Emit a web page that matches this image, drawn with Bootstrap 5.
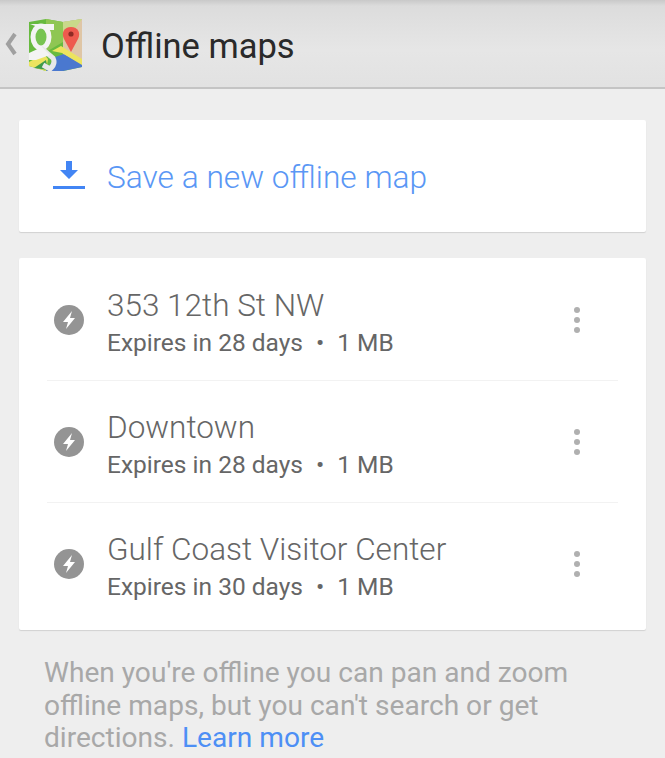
<!DOCTYPE html>
<html lang="en">
<head>
    <meta charset="UTF-8">
    <meta name="viewport" content="width=device-width, initial-scale=1.0">
    <title>Offline maps</title>
    <link href="https://cdn.jsdelivr.net/npm/bootstrap@5.3.0/dist/css/bootstrap.min.css" rel="stylesheet">
    <style>
        html, body { height: 100%; overflow: hidden; }
        body { background: #eeeeee; font-family: Roboto, "Liberation Sans", sans-serif; }
        .top-bar { height: 89px; background: linear-gradient(#c9c9c9 0, #dcdcdc 6px, #e6e6e6 50px, #e2e2e2 86px); border-bottom: 2px solid #c4c4c4; padding-left: 4px; }
        .top-title { font-size: 34.5px; color: #2a2a2a; margin: 5px 0 0 18px; line-height: 1; }
        .back-icon { width: 14px; height: 26px; margin-right: 10px; }
        .map-logo { width: 55px; height: 54px; margin-top: 2px; filter: blur(.5px); }
        .page-body { padding: 31px 19px 0; }
        .sheet { background: #fff; border-radius: 2px; box-shadow: 0 1px 1px rgba(0,0,0,.12); }
        .save-row { height: 112px; padding-left: 33px; margin-bottom: 26px; }
        .save-text { font-size: 31.7px; font-weight: 300; color: #5a97f5; margin: 3px 0 0 21px; }
        .map-list { padding: 1px 28px 0; height: 372px; }
        .map-row { height: 122px; border-bottom: 1px solid #f2f2f2; padding-left: 7px; }
        .map-row:last-child { border-bottom: 0; }
        .bolt-icon { width: 30px; height: 30px; margin-right: 23px; flex-shrink: 0; }
        .map-text { padding-top: 6px; }
        .map-name { font-size: 31.5px; font-weight: 300; color: #666; line-height: 36px; }
        .map-info { font-size: 24.5px; color: #666; line-height: 30px; margin-top: 4px; }
        .map-info span { margin: 0 13px; }
        .more-dots { width: 8px; height: 28px; margin-right: 37px; }
        .foot-note { font-size: 28.1px; line-height: 32.5px; color: #a8a8a8; padding: 27px 0 0 25px; white-space: nowrap; }
        .foot-note a { color: #4d8ff5; text-decoration: none; }
    </style>
</head>
<body>
    <!-- Action bar -->
    <div class="top-bar d-flex align-items-center">
        <svg class="back-icon" viewBox="0 0 14 26"><path d="M11 3 L4 13 L11 23" fill="none" stroke="#a0a0a0" stroke-width="4"/></svg>
        <svg class="map-logo" viewBox="0 0 55 54">
            <!-- map sheet -->
            <path d="M1 4 L18 1 L35 4 L54 1 V49 L35 53 L18 53 L1 48 Z" fill="#67ba3f"/>
            <path d="M18 1 L35 4 V24 L18 34 Z" fill="#8fc653"/>
            <path d="M35 4 L54 1 V49 L35 40 Z" fill="#dfc6a6"/>
            <path d="M35 4 L54 1 L38 24 L35 22 Z" fill="#c9d98a"/>
            <!-- roads and water -->
            <path d="M18 53 L27 39 L36 36 L54 46 V49 L35 53 Z" fill="#4a78cf"/>
            <path d="M24 33 L33 28 L54 41 V47 L34 35 Z" fill="#ece45f"/>
            <path d="M1 48 V44 L16 36 L20 41 L18 53 Z" fill="#ece45f"/>
            <path d="M6 50 L18 42 L20 52 Z" fill="#3f9b4b"/>
            <!-- g mark -->
            <ellipse cx="13" cy="19" rx="8" ry="11" fill="#78c452" stroke="#f4f4f4" stroke-width="5"/>
            <path d="M2 6 H26 V12 H18 Z" fill="#f4f4f4"/>
            <path d="M13 30 L25 40 Q28 46 22 51 L15 47" fill="none" stroke="#e8e8e8" stroke-width="5"/>
            <path d="M1 35 L14 29 L22 37 L8 42 L1 42 Z" fill="#f4f4f4"/>
            <!-- pin -->
            <path d="M43 9 C36 9 33 15 36 21 L43 34 L50 21 C53 15 50 9 43 9 Z" fill="#ee5a4e"/>
            <circle cx="43" cy="16" r="2.6" fill="#8e2a24"/>
        </svg>
        <div class="top-title">Offline maps</div>
    </div>

    <div class="page-body">
        <!-- Save row -->
        <div class="sheet save-row d-flex align-items-center">
            <svg width="34" height="30" viewBox="0 0 34 30"><path d="M14 0 H20 V9 H26 L17 18 L8 9 H14 Z M1 25 H33 V28 H1 Z" fill="#4285f4"/></svg>
            <div class="save-text">Save a new offline map</div>
        </div>

        <!-- Saved maps -->
        <div class="sheet map-list">
            <div class="map-row d-flex align-items-center">
                <svg class="bolt-icon" viewBox="0 0 30 30"><circle cx="15" cy="15" r="15" fill="#949494"/><path d="M18 6 L9 17 H14 L12 24 L21 13 H16 Z" fill="#fff"/></svg>
                <div class="flex-grow-1 map-text">
                    <div class="map-name">353 12th St NW</div>
                    <div class="map-info">Expires in 28 days<span>•</span>1 MB</div>
                </div>
                <svg class="more-dots" viewBox="0 0 8 28"><circle cx="4" cy="4" r="3" fill="#b0b0b0"/><circle cx="4" cy="14" r="3" fill="#b0b0b0"/><circle cx="4" cy="24" r="3" fill="#b0b0b0"/></svg>
            </div>
            <div class="map-row d-flex align-items-center">
                <svg class="bolt-icon" viewBox="0 0 30 30"><circle cx="15" cy="15" r="15" fill="#949494"/><path d="M18 6 L9 17 H14 L12 24 L21 13 H16 Z" fill="#fff"/></svg>
                <div class="flex-grow-1 map-text">
                    <div class="map-name">Downtown</div>
                    <div class="map-info">Expires in 28 days<span>•</span>1 MB</div>
                </div>
                <svg class="more-dots" viewBox="0 0 8 28"><circle cx="4" cy="4" r="3" fill="#b0b0b0"/><circle cx="4" cy="14" r="3" fill="#b0b0b0"/><circle cx="4" cy="24" r="3" fill="#b0b0b0"/></svg>
            </div>
            <div class="map-row d-flex align-items-center">
                <svg class="bolt-icon" viewBox="0 0 30 30"><circle cx="15" cy="15" r="15" fill="#949494"/><path d="M18 6 L9 17 H14 L12 24 L21 13 H16 Z" fill="#fff"/></svg>
                <div class="flex-grow-1 map-text">
                    <div class="map-name">Gulf Coast Visitor Center</div>
                    <div class="map-info">Expires in 30 days<span>•</span>1 MB</div>
                </div>
                <svg class="more-dots" viewBox="0 0 8 28"><circle cx="4" cy="4" r="3" fill="#b0b0b0"/><circle cx="4" cy="14" r="3" fill="#b0b0b0"/><circle cx="4" cy="24" r="3" fill="#b0b0b0"/></svg>
            </div>
        </div>

        <div class="foot-note">When you're offline you can pan and zoom<br>offline maps, but you can't search or get<br>directions. <a href="#">Learn more</a></div>
    </div>

    <script src="https://cdn.jsdelivr.net/npm/bootstrap@5.3.0/dist/js/bootstrap.bundle.min.js"></script>
</body>
</html>
